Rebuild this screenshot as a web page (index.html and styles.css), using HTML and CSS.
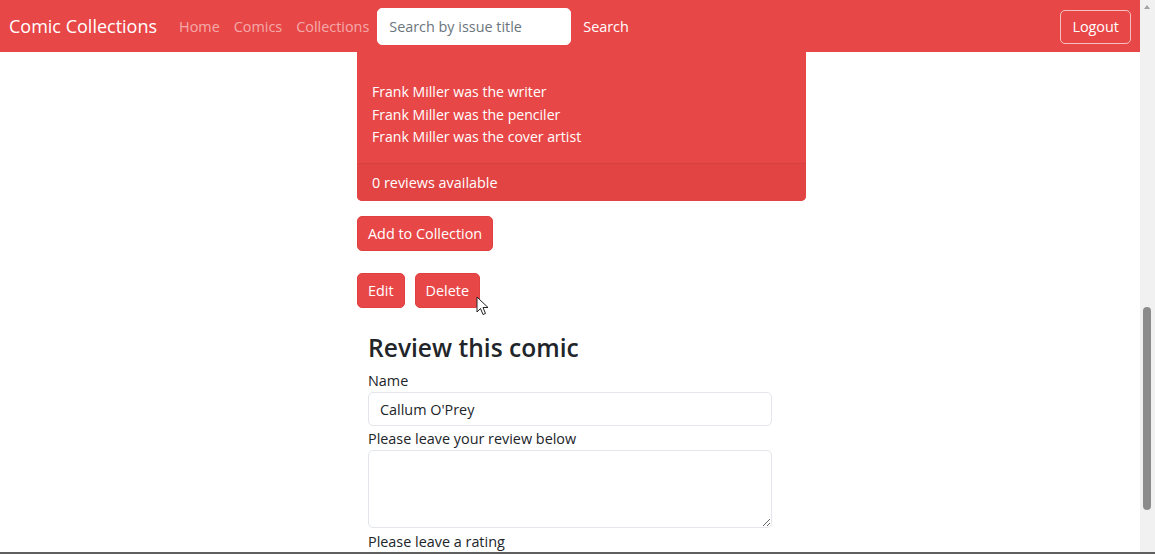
FILE: index.html
```html
<!DOCTYPE html>
<html lang="en">
<head>
<meta charset="utf-8">
<title>Comic Collections</title>
<link rel="stylesheet" href="styles.css">
</head>
<body>
<div class="window">
  <div class="page">
    <nav class="navbar">
      <a class="brand" href="#">Comic Collections</a>
      <a class="nav-link" href="#">Home</a>
      <a class="nav-link" href="#">Comics</a>
      <a class="nav-link" href="#">Collections</a>
      <form class="search">
        <input class="search-input" type="text" placeholder="Search by issue title">
        <button class="search-btn" type="button">Search</button>
      </form>
      <button class="logout" type="button">Logout</button>
    </nav>
    <main class="content">
      <div class="card">
        <div class="card-body">
          <p>Frank Miller was the writer</p>
          <p>Frank Miller was the penciler</p>
          <p>Frank Miller was the cover artist</p>
        </div>
        <div class="card-footer">0 reviews available</div>
      </div>
      <div class="actions">
        <button class="btn" type="button">Add to Collection</button>
      </div>
      <div class="actions row">
        <button class="btn" type="button">Edit</button>
        <button class="btn cursor-host" type="button">Delete
          <svg class="cursor" width="13" height="20" viewBox="0 0 13 20"><path d="M1 1 L1 16 L4.5 12.5 L7 18.5 L9.5 17.5 L7 11.5 L12 11.5 Z" fill="#fff" stroke="#222" stroke-width="1" stroke-linejoin="round"/></svg>
        </button>
      </div>
      <form class="review">
        <h2>Review this comic</h2>
        <label>Name</label>
        <input class="field" type="text" value="Callum O'Prey">
        <label class="gap">Please leave your review below</label>
        <textarea class="field area"></textarea>
        <label class="gap last">Please leave a rating</label>
      </form>
    </main>
  </div>
  <div class="scrollbar">
    <div class="arrow"></div>
    <div class="thumb"></div>
  </div>
</div>
<div class="bottom-edge"></div>
</body>
</html>
```
FILE: styles.css
```css
* { box-sizing: border-box; }
html, body { margin: 0; padding: 0; height: 100%; overflow: hidden; }
body {
  font-family: "Open Sans", "Noto Sans", sans-serif;
  font-size: 14.4px;
  line-height: 1.5;
  color: #212529;
  background: #fff;
  display: flex;
  flex-direction: column;
}
.window { display: flex; flex: 1; min-height: 0; }
.page { flex: 1; display: flex; flex-direction: column; min-width: 0; }
.navbar {
  flex: none;
  height: 52px;
  background: #e84747;
  display: flex;
  align-items: center;
  padding: 1px 9px 0;
}
.brand {
  color: #fff;
  text-decoration: none;
  font-size: 18px;
  margin-right: 15px;
}
.nav-link {
  color: rgba(255,255,255,0.55);
  text-decoration: none;
  padding: 0 7px;
}
.search { display: flex; align-items: center; margin-left: 1px; }
.search-input {
  width: 194px;
  height: 37px;
  border: 1px solid #fff;
  border-radius: 5px;
  padding: 0 11px;
  font: inherit;
  color: #212529;
}
.search-input::placeholder { color: #6c757d; }
.search-btn {
  background: none;
  border: none;
  color: #fff;
  font: inherit;
  padding: 0 12px;
}
.logout {
  margin-left: auto;
  background: none;
  border: 1px solid rgba(255,255,255,0.65);
  border-radius: 5px;
  color: #fff;
  font: inherit;
  height: 34px;
  padding: 0 11px;
}
.content { flex: none; padding-left: 357px; }
.card {
  width: 449px;
  background: #e84747;
  color: #fff;
  border-radius: 0 0 5px 5px;
}
.card-body { padding: 29px 15px 14px; }
.card-body p { margin: 0; line-height: 22.5px; font-size: 14.1px; }
.card-footer {
  padding: 8px 15px 8px;
  background: #e24444;
  border-top: 1px solid #d54040;
  border-radius: 0 0 5px 5px;
}
.actions { margin-top: 15px; display: flex; gap: 10px; }
.actions.row { margin-top: 22px; }
.btn {
  background: #e84747;
  color: #fff;
  border: 1px solid #e04040;
  border-radius: 5px;
  font: inherit;
  height: 35px;
  padding: 0 10px;
}
.cursor-host { position: relative; }
.cursor { position: absolute; left: 60px; top: 22px; }
.review { width: 426px; padding-left: 11px; display: flex; flex-direction: column; }
.review h2 {
  font-size: 24.6px;
  font-weight: 600;
  line-height: 31px;
  margin: 24px 0 7px;
}
.review label { line-height: 22px; }
.review label.gap { margin-top: 2px; }
.review label.last { margin-top: 3px; }
.field {
  width: 404px;
  height: 34px;
  border: 1px solid #e3e6ea;
  border-radius: 5px;
  padding: 0 11px;
  font: inherit;
  color: #212529;
}
.area { height: 78px; resize: vertical; }
.scrollbar {
  width: 15px;
  background: #f1f1f1;
  position: relative;
}
.arrow {
  position: absolute;
  left: 4px; top: 5px;
  width: 0; height: 0;
  border-left: 3.5px solid transparent;
  border-right: 3.5px solid transparent;
  border-bottom: 4px solid #a3a3a3;
}
.thumb {
  position: absolute;
  left: 3px; top: 307px;
  width: 8px; height: 203px;
  border-radius: 4px;
  background: #8c8c8c;
}
.bottom-edge { height: 2px; background: #5f5f5f; }
```
